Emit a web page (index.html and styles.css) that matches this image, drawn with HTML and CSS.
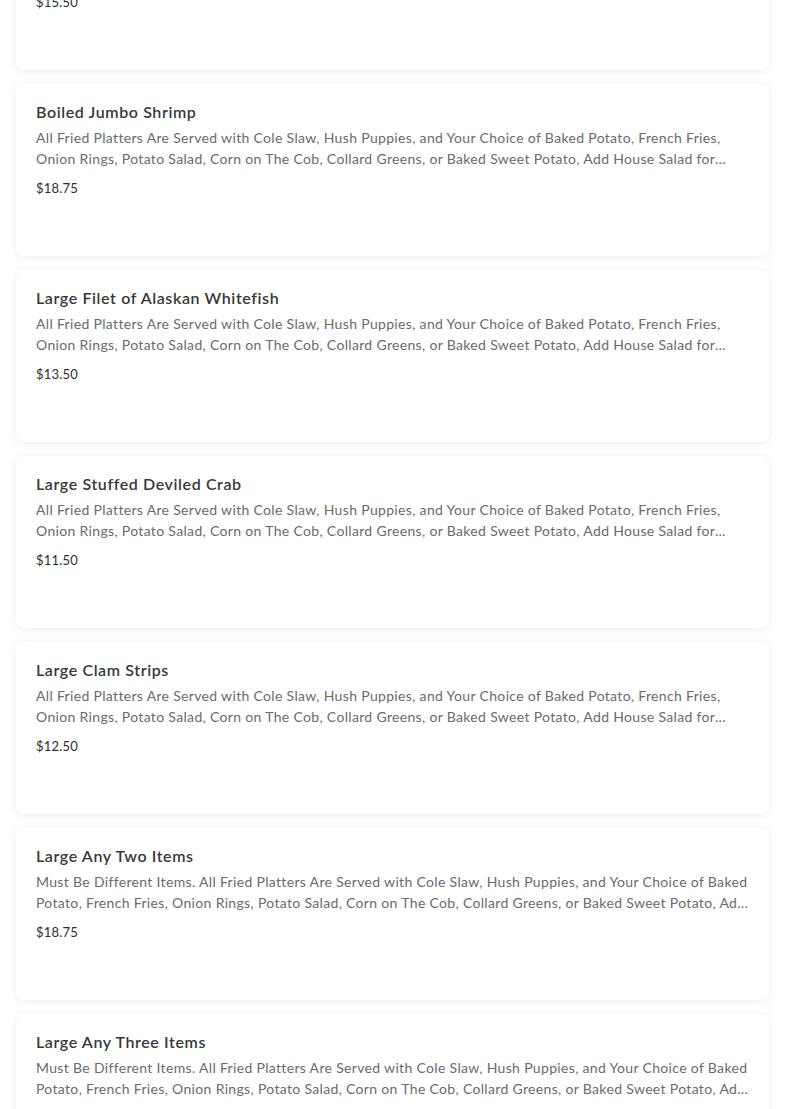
FILE: index.html
```html
<!DOCTYPE html>
<html>
<head>
<meta charset="utf-8">
<link rel="stylesheet" href="styles.css">
</head>
<body>
<div class="list">
  <div class="card">
    <div class="title">Boiled Shrimp</div>
    <div class="desc">All Fried Platters Are Served with Cole Slaw, Hush Puppies, and Your Choice of Baked Potato, French Fries, Onion Rings, Potato Salad, Corn on The Cob, Collard Greens, or Baked Sweet Potato, Add House Salad for $3.00.</div>
    <div class="price">$15.50</div>
  </div>
  <div class="card">
    <div class="title">Boiled Jumbo Shrimp</div>
    <div class="desc">All Fried Platters Are Served with Cole Slaw, Hush Puppies, and Your Choice of Baked Potato, French Fries, Onion Rings, Potato Salad, Corn on The Cob, Collard Greens, or Baked Sweet Potato, Add House Salad for $3.00.</div>
    <div class="price">$18.75</div>
  </div>
  <div class="card">
    <div class="title">Large Filet of Alaskan Whitefish</div>
    <div class="desc">All Fried Platters Are Served with Cole Slaw, Hush Puppies, and Your Choice of Baked Potato, French Fries, Onion Rings, Potato Salad, Corn on The Cob, Collard Greens, or Baked Sweet Potato, Add House Salad for $3.00.</div>
    <div class="price">$13.50</div>
  </div>
  <div class="card">
    <div class="title">Large Stuffed Deviled Crab</div>
    <div class="desc">All Fried Platters Are Served with Cole Slaw, Hush Puppies, and Your Choice of Baked Potato, French Fries, Onion Rings, Potato Salad, Corn on The Cob, Collard Greens, or Baked Sweet Potato, Add House Salad for $3.00.</div>
    <div class="price">$11.50</div>
  </div>
  <div class="card">
    <div class="title">Large Clam Strips</div>
    <div class="desc">All Fried Platters Are Served with Cole Slaw, Hush Puppies, and Your Choice of Baked Potato, French Fries, Onion Rings, Potato Salad, Corn on The Cob, Collard Greens, or Baked Sweet Potato, Add House Salad for $3.00.</div>
    <div class="price">$12.50</div>
  </div>
  <div class="card">
    <div class="title">Large Any Two Items</div>
    <div class="desc">Must Be Different Items. All Fried Platters Are Served with Cole Slaw, Hush Puppies, and Your Choice of Baked Potato, French Fries, Onion Rings, Potato Salad, Corn on The Cob, Collard Greens, or Baked Sweet Potato, Add House Salad for $3.00.</div>
    <div class="price">$18.75</div>
  </div>
  <div class="card">
    <div class="title">Large Any Three Items</div>
    <div class="desc">Must Be Different Items. All Fried Platters Are Served with Cole Slaw, Hush Puppies, and Your Choice of Baked Potato, French Fries, Onion Rings, Potato Salad, Corn on The Cob, Collard Greens, or Baked Sweet Potato, Add House Salad for $3.00.</div>
    <div class="price">$22.75</div>
  </div>
</div>
</body>
</html>
```
FILE: styles.css
```css
html, body {
  margin: 0;
  padding: 0;
  background: #ffffff;
  overflow: hidden;
}
.list {
  display: flex;
  flex-direction: column;
  gap: 14px;
  padding: 0 16px;
  margin-top: -102px;
  font-family: "Lato", "Liberation Sans", sans-serif;
}
.card {
  background: #fff;
  border-radius: 8px;
  box-shadow: 0 1px 8px rgba(0, 0, 0, 0.08);
  height: 172px;
  box-sizing: border-box;
  padding: 16px 19px 16px 20px;
  display: flex;
  flex-direction: column;
}
.title {
  font-size: 16px;
  line-height: 24px;
  font-weight: 600;
  color: #383838;
  letter-spacing: 0.6px;
}
.desc {
  margin-top: 3px;
  font-size: 14px;
  line-height: 21px;
  color: #6b6b6b;
  letter-spacing: 0.33px;
  display: -webkit-box;
  -webkit-line-clamp: 2;
  -webkit-box-orient: vertical;
  overflow: hidden;
}
.price {
  margin-top: 9px;
  font-size: 13px;
  line-height: 20px;
  color: #2e2e2e;
  letter-spacing: 0.2px;
}
```
